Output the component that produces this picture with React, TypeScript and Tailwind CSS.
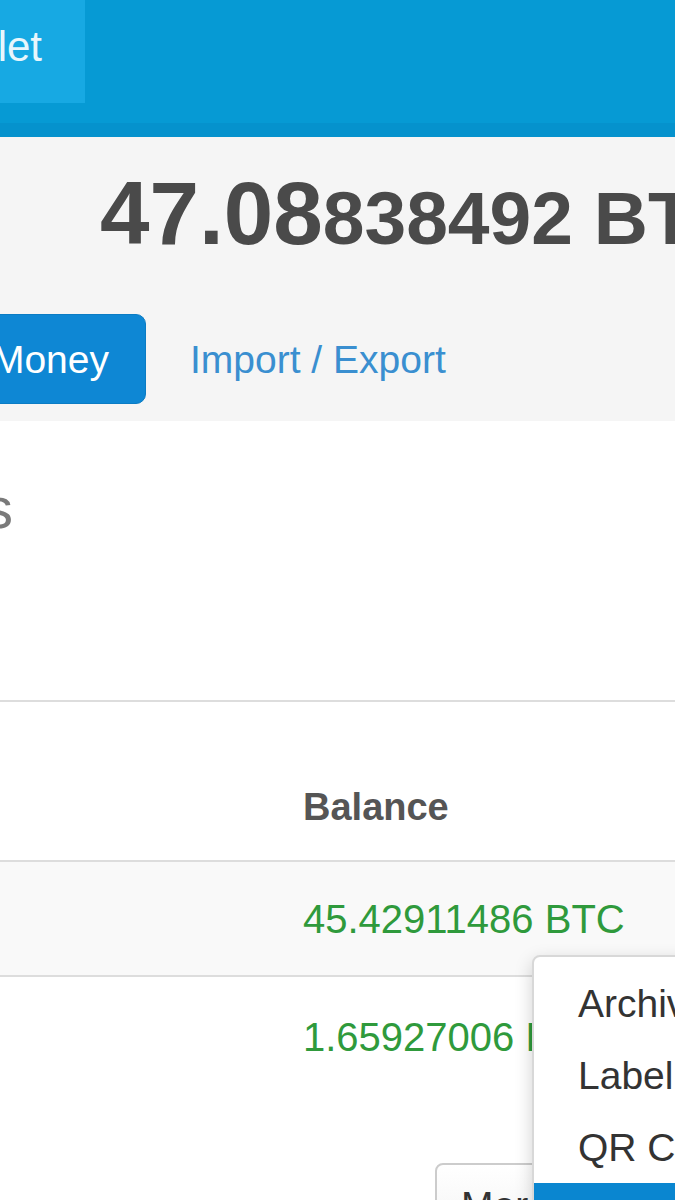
export default function App() {
  return (
    <div className="relative w-[675px] h-[1200px] overflow-hidden bg-white font-['Liberation_Sans',Arial,sans-serif]">
      {/* Header */}
      <header className="h-[137px] bg-[#069ad4] border-b-[14px] border-[#0592cd] flex">
        <div className="w-[85px] h-[103px] bg-[#17a9e3] flex justify-end pr-[43px] pt-[26px]">
          <span className="text-[42px] leading-none text-white/90 whitespace-nowrap">My Wallet</span>
        </div>
      </header>

      {/* Balance band */}
      <section className="h-[284px] bg-[#f5f5f5] pt-[32px]">
        <div className="flex items-baseline pl-[100px] whitespace-nowrap font-bold text-[#4a4a4a]">
          <span className="text-[89px] leading-none">47.08</span>
          <span className="text-[75px] leading-none">838492 BTC</span>
        </div>
        <div className="flex items-center mt-[56px] whitespace-nowrap">
          <div className="w-[300px] -ml-[154px] h-[90px] rounded-[10px] bg-[#0e87d4] border border-[#0b7cc4] flex items-center justify-end pr-[36px]">
            <span className="text-[39px] leading-none text-white">Send Money</span>
          </div>
          <span className="ml-[44px] text-[39px] leading-none text-[#3a8fd0]">Import / Export</span>
        </div>
      </section>

      {/* Heading */}
      <section className="h-[281px] border-b-2 border-[#dddddd] pt-[58px]">
        <div className="w-[13px] flex justify-end whitespace-nowrap">
          <span className="text-[58px] leading-none text-[#7a7a7a]">My Bitcoin Addresses</span>
        </div>
      </section>

      {/* Table header */}
      <div className="h-[160px] border-b-2 border-[#dddddd] pt-[86px] pl-[303px]">
        <span className="text-[38px] leading-none font-bold text-[#555555]">Balance</span>
      </div>

      {/* Row 1 */}
      <div className="h-[115px] bg-[#f9f9f9] border-b-2 border-[#dddddd] pt-[37px] pl-[303px] whitespace-nowrap">
        <span className="text-[40px] leading-none text-[#2f9a3c]">45.42911486 BTC</span>
      </div>

      {/* Row 2 */}
      <div className="pt-[40px] pl-[303px] whitespace-nowrap">
        <div className="text-[40px] leading-none text-[#2f9a3c]">1.65927006 BTC</div>
        <div className="mt-[106px] ml-[132px] inline-flex items-center h-[84px] px-[24px] rounded-[8px] border-2 border-[#cccccc] bg-gradient-to-b from-white to-[#f2f2f2]">
          <span className="text-[39px] leading-none text-[#333333]">More ▾</span>
        </div>
      </div>

      {/* Dropdown menu */}
      <div className="absolute left-[532px] top-[955px] w-[300px] h-[320px] bg-white border-2 border-[#d8d8d8] rounded-tl-[8px] shadow-[0_6px_18px_rgba(0,0,0,0.18)] pt-[10px] whitespace-nowrap">
        <div className="h-[72px] flex items-center pl-[44px]">
          <span className="text-[39px] leading-none text-[#333333]">Archive</span>
        </div>
        <div className="h-[72px] flex items-center pl-[44px]">
          <span className="text-[39px] leading-none text-[#333333]">Label</span>
        </div>
        <div className="h-[72px] flex items-center pl-[44px]">
          <span className="text-[39px] leading-none text-[#333333]">QR Code</span>
        </div>
        <div className="h-[72px] flex items-center pl-[44px] bg-[#0a86d0]">
          <span className="text-[39px] leading-none text-white">Private Key</span>
        </div>
      </div>
    </div>
  );
}
